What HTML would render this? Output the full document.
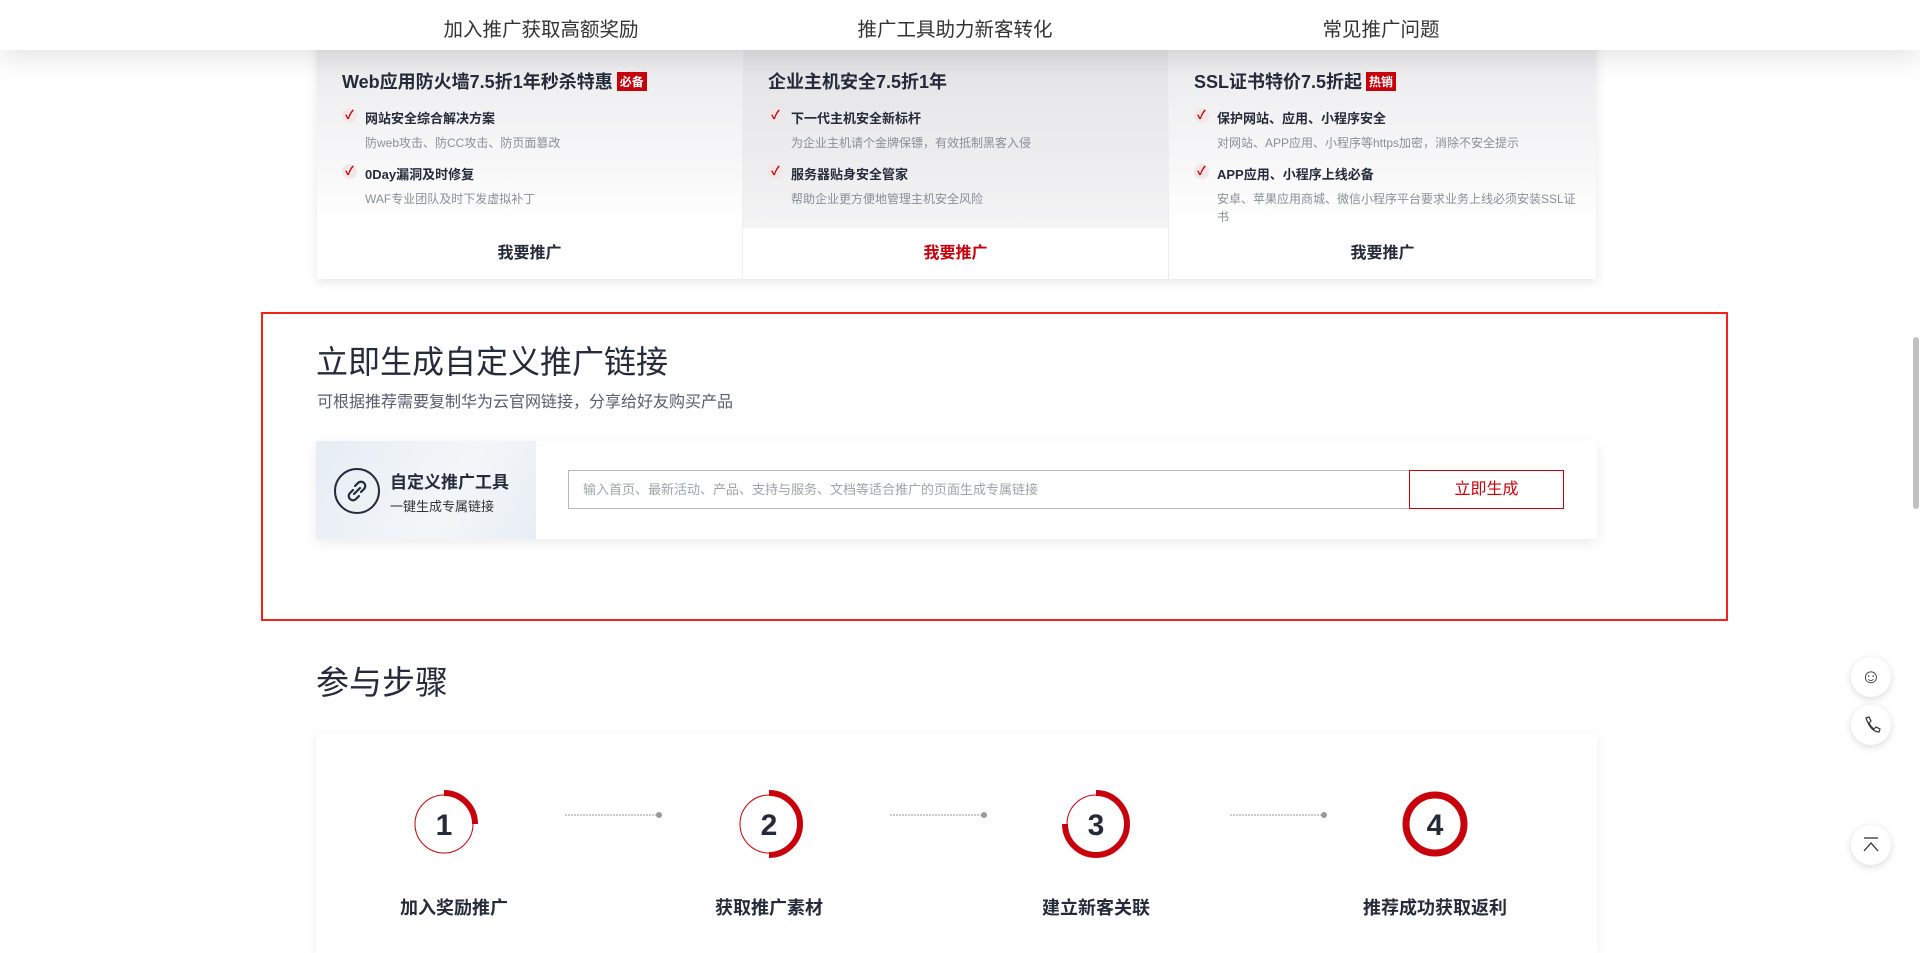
<!DOCTYPE html>
<html><head><meta charset="utf-8"><style>
*{margin:0;padding:0;box-sizing:border-box}
body{width:1920px;height:929px;overflow:hidden;background:#fff;font-family:"Liberation Sans","Noto Sans CJK SC",sans-serif;color:#252b3a;position:relative}
.abs{position:absolute}
.nav{position:absolute;left:0;top:0;width:1920px;height:50px;background:#fff;box-shadow:0 6px 30px rgba(0,0,0,.12);z-index:5}
.nav span{position:absolute;top:13px;font-size:19.5px;color:#333;transform:translateX(-50%)}
.cards{position:absolute;left:317px;top:30px;width:1279px;height:249px;box-shadow:0 3px 10px rgba(0,0,0,.1);background:#fff}
.col{position:absolute;top:0;width:426px;height:249px;border-right:1px solid #eee}
.col .top{height:198px;background:linear-gradient(#e9e9eb,#f8f8f9 70%,#fff)}
.col h3{position:absolute;left:25px;top:38px;font-size:18px;font-weight:bold;color:#252b3a}
.tag{display:inline-block;background:#c7000b;color:#fff;font-size:12px;padding:1px 3px;margin-left:4px;vertical-align:2px}
.it{position:absolute;left:25px}
.it b{display:block;font-size:13px;color:#252b3a;padding-left:23px;position:relative}
.it b:before{content:"✓";position:absolute;left:0;top:0;color:#c7000b;font-size:12px;width:15px;height:15px;border-radius:50%;background:#f2e6e6;text-align:center;line-height:15px;font-weight:bold}
.it i{display:block;font-style:normal;font-size:12px;color:#8a8e99;padding-left:23px;margin-top:7px;line-height:18px}
.col .btn{position:absolute;left:0;top:198px;width:100%;height:51px;line-height:51px;text-align:center;font-size:16px;font-weight:bold}
.redbox{position:absolute;left:261px;top:312px;width:1467px;height:309px;border:2px solid #f5221b}
.lbl{position:absolute;top:894px;width:200px;text-align:center;font-size:18px;font-weight:bold;white-space:nowrap}
</style></head><body>
<div class="nav"><span style="left:541px">加入推广获取高额奖励</span><span style="left:955px">推广工具助力新客转化</span><span style="left:1381px">常见推广问题</span></div>

<div class="cards">
 <div class="col" style="left:0"><div class="top"></div>
  <h3>Web应用防火墙7.5折1年秒杀特惠<span class="tag">必备</span></h3>
  <div class="it" style="top:78px"><b>网站安全综合解决方案</b><i>防web攻击、防CC攻击、防页面篡改</i></div>
  <div class="it" style="top:134px"><b>0Day漏洞及时修复</b><i>WAF专业团队及时下发虚拟补丁</i></div>
  <div class="btn">我要推广</div></div>
 <div class="col" style="left:426px"><div class="top" style="background:linear-gradient(#e2e2e4,#eeeef0 70%,#f4f4f5)"></div>
  <h3>企业主机安全7.5折1年</h3>
  <div class="it" style="top:78px"><b>下一代主机安全新标杆</b><i>为企业主机请个金牌保镖，有效抵制黑客入侵</i></div>
  <div class="it" style="top:134px"><b>服务器贴身安全管家</b><i>帮助企业更方便地管理主机安全风险</i></div>
  <div class="btn" style="color:#c7000b">我要推广</div></div>
 <div class="col" style="left:852px;width:427px;border-right:0"><div class="top"></div>
  <h3>SSL证书特价7.5折起<span class="tag">热销</span></h3>
  <div class="it" style="top:78px"><b>保护网站、应用、小程序安全</b><i>对网站、APP应用、小程序等https加密，消除不安全提示</i></div>
  <div class="it" style="top:134px;width:385px"><b>APP应用、小程序上线必备</b><i>安卓、苹果应用商城、微信小程序平台要求业务上线必须安装SSL证书</i></div>
  <div class="btn">我要推广</div></div>
</div>

<div class="redbox"></div>
<div class="abs" style="left:316px;top:337px;font-size:32px;color:#252b3a">立即生成自定义推广链接</div>
<div class="abs" style="left:317px;top:388px;font-size:16px;color:#575d6c">可根据推荐需要复制华为云官网链接，分享给好友购买产品</div>
<div class="abs" style="left:316px;top:441px;width:1281px;height:98px;background:#fff;box-shadow:0 4px 12px rgba(0,0,0,.08)">
 <div class="abs" style="left:0;top:0;width:220px;height:98px;background:linear-gradient(120deg,#e6edf4,#f3f6f9 60%,#e8eef5)"></div>
 <svg class="abs" style="left:17px;top:26px" width="48" height="48" viewBox="0 0 48 48"><circle cx="24" cy="24" r="22" fill="none" stroke="#252b3a" stroke-width="2"/><g fill="none" stroke="#252b3a" stroke-width="2.2" stroke-linecap="round"><path d="M22 19l3-3a4 4 0 016 6l-3 3"/><path d="M26 29l-3 3a4 4 0 01-6-6l3-3"/><path d="M21 27l6-6"/></g></svg>
 <div class="abs" style="left:74px;top:27px;font-size:17px;font-weight:bold">自定义推广工具</div>
 <div class="abs" style="left:74px;top:55px;font-size:13px;color:#333">一键生成专属链接</div>
 <div class="abs" style="left:252px;top:29px;width:842px;height:39px;border:1px solid #b5b8c2;font-size:13px;color:#a0a3ab;line-height:37px;padding-left:14px">输入首页、最新活动、产品、支持与服务、文档等适合推广的页面生成专属链接</div>
 <div class="abs" style="left:1093px;top:29px;width:155px;height:39px;border:1px solid #c7000b;color:#c7000b;font-size:16px;text-align:center;line-height:37px">立即生成</div>
</div>

<div class="abs" style="left:316px;top:656px;font-size:33px;color:#252b3a">参与步骤</div>
<div class="abs" style="left:316px;top:733px;width:1281px;height:220px;background:#fff;box-shadow:0 2px 10px rgba(0,0,0,.07)"></div>
<svg class="abs" style="left:0;top:760px" width="1600" height="120">
 <g fill="none">
  <circle cx="444" cy="64" r="29" stroke="#c7000b" stroke-width="1"/><path d="M444 33 A31 31 0 0 1 475 64" stroke="#c7000b" stroke-width="6"/>
  <circle cx="769" cy="64" r="29" stroke="#c7000b" stroke-width="1"/><path d="M769 33 A31 31 0 0 1 769 95" stroke="#c7000b" stroke-width="6"/>
  <circle cx="1096" cy="64" r="29" stroke="#c7000b" stroke-width="1"/><path d="M1096 33 A31 31 0 1 1 1065 64" stroke="#c7000b" stroke-width="6"/>
  <circle cx="1435" cy="64" r="29" stroke="#c7000b" stroke-width="7"/>
  <g stroke="#999" stroke-width="1" stroke-dasharray="2 1"><line x1="565" y1="55" x2="657" y2="55"/><line x1="890" y1="55" x2="982" y2="55"/><line x1="1230" y1="55" x2="1322" y2="55"/></g>
 </g>
 <g fill="#999"><circle cx="659" cy="55" r="3"/><circle cx="984" cy="55" r="3"/><circle cx="1324" cy="55" r="3"/></g>
 <g font-family="Liberation Sans" font-size="30" font-weight="bold" fill="#252b3a" text-anchor="middle"><text x="444" y="75">1</text><text x="769" y="75">2</text><text x="1096" y="75">3</text><text x="1435" y="75">4</text></g>
</svg>
<div class="lbl" style="left:354px">加入奖励推广</div>
<div class="lbl" style="left:669px">获取推广素材</div>
<div class="lbl" style="left:996px">建立新客关联</div>
<div class="lbl" style="left:1335px">推荐成功获取返利</div>

<div class="abs" style="left:1851px;top:657px;width:40px;height:40px;border-radius:50%;background:#fff;box-shadow:0 2px 8px rgba(0,0,0,.15);text-align:center;line-height:40px;font-size:20px;color:#333">☺</div>
<div class="abs" style="left:1851px;top:705px;width:40px;height:40px;border-radius:50%;background:#fff;box-shadow:0 2px 8px rgba(0,0,0,.15)"><svg width="40" height="40"><path d="M15 13l3-1 2 4-2 2q2 4 5 6l2-2 4 2-1 3q-8 0-13-14z" fill="none" stroke="#333" stroke-width="1.2"/></svg></div>
<div class="abs" style="left:1851px;top:825px;width:40px;height:40px;border-radius:50%;background:#fff;box-shadow:0 2px 8px rgba(0,0,0,.15)"><svg width="40" height="40"><g fill="none" stroke="#333" stroke-width="1.3"><line x1="13" y1="13" x2="27" y2="13"/><path d="M13 26l7-8 7 8"/></g></svg></div>
<div class="abs" style="left:1913px;top:337px;width:6px;height:172px;background:#c1c1c1;border-radius:3px"></div>
</body></html>
